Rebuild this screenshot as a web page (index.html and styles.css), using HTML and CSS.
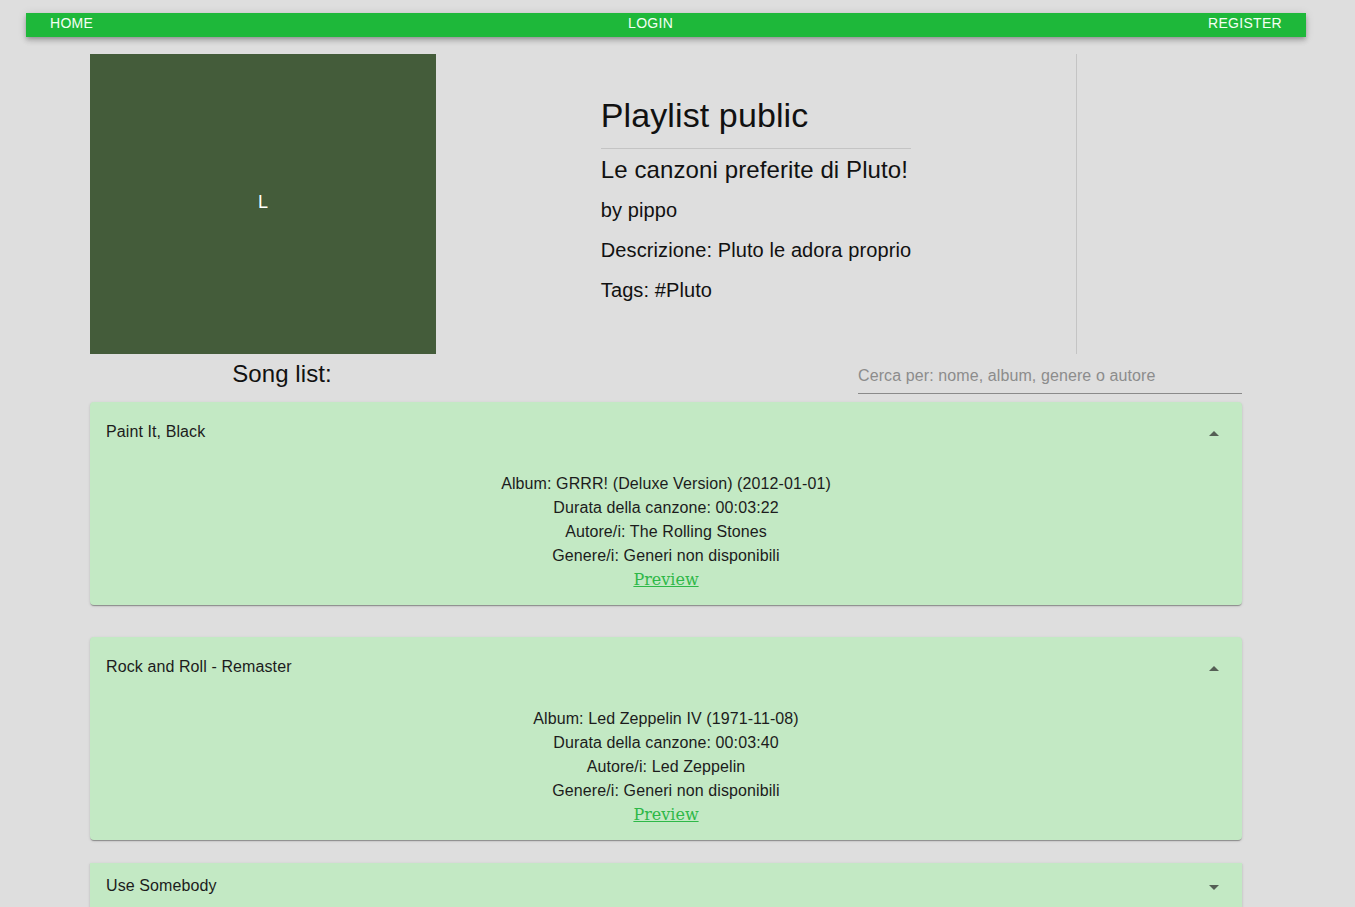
FILE: index.html
```html
<!DOCTYPE html>
<html>
<head>
<meta charset="utf-8">
<link rel="stylesheet" href="styles.css">
</head>
<body>
<div class="page">
  <nav class="navbar">
    <a class="nav-btn">HOME</a>
    <a class="nav-btn">LOGIN</a>
    <a class="nav-btn">REGISTER</a>
  </nav>
  <main class="container">
    <section class="top">
      <div class="cover"><span class="cover-letter">L</span></div>
      <div class="info-area">
        <div class="info">
          <h1 class="title">Playlist public</h1>
          <hr class="divider">
          <h2 class="name">Le canzoni preferite di Pluto!</h2>
          <p class="meta">by pippo</p>
          <p class="meta">Descrizione: Pluto le adora proprio</p>
          <p class="meta">Tags: #Pluto</p>
        </div>
      </div>
      <div class="side"></div>
    </section>
    <section class="list-head">
      <div class="list-title">Song list:</div>
      <div class="spacer"></div>
      <div class="search"><span class="placeholder">Cerca per: nome, album, genere o autore</span></div>
    </section>
    <section class="songs">
      <div class="song expanded">
        <div class="summary"><span>Paint It, Black</span><span class="arrow up"></span></div>
        <div class="details">
          <div>Album: GRRR! (Deluxe Version) (2012-01-01)</div>
          <div>Durata della canzone: 00:03:22</div>
          <div>Autore/i: The Rolling Stones</div>
          <div>Genere/i: Generi non disponibili</div>
          <a class="preview" href="#">Preview</a>
        </div>
      </div>
      <div class="song expanded second">
        <div class="summary"><span>Rock and Roll - Remaster</span><span class="arrow up"></span></div>
        <div class="details">
          <div>Album: Led Zeppelin IV (1971-11-08)</div>
          <div>Durata della canzone: 00:03:40</div>
          <div>Autore/i: Led Zeppelin</div>
          <div>Genere/i: Generi non disponibili</div>
          <a class="preview" href="#">Preview</a>
        </div>
      </div>
      <div class="song collapsed">
        <div class="summary"><span>Use Somebody</span><span class="arrow down"></span></div>
      </div>
    </section>
  </main>
</div>
</body>
</html>
```

FILE: styles.css
```css
html, body {
  margin: 0;
  padding: 0;
  background: #dedede;
  overflow: hidden;
}
body {
  font-family: "Liberation Sans", Arial, sans-serif;
  color: #111;
  letter-spacing: 0.1px;
}
.page {
  width: 1332px;
  padding-top: 13px;
}
.navbar {
  margin-left: 26px;
  width: 1280px;
  height: 24px;
  background: #1eb83a;
  box-shadow: 0 2px 4px -1px rgba(0,0,0,0.2), 0 4px 5px 0 rgba(0,0,0,0.14), 0 1px 10px 0 rgba(0,0,0,0.12);
  display: flex;
  justify-content: space-between;
  align-items: flex-start;
  padding: 0 24px;
  box-sizing: border-box;
}
.nav-btn {
  color: #f4fff4;
  font-size: 14px;
  line-height: 20px;
  letter-spacing: 0.3px;
}
.container {
  margin-left: 90px;
  width: 1152px;
}
.top {
  display: flex;
  margin-top: 17px;
  height: 300px;
}
.cover {
  width: 346px;
  height: 300px;
  background: #445c3a;
  color: #fff;
  font-size: 18px;
  display: flex;
  align-items: center;
  justify-content: center;
  flex: none;
}
.cover-letter {
  margin-bottom: 4px;
}
.info-area {
  width: 640px;
  border-right: 1px solid #c4c4c4;
  display: flex;
  justify-content: center;
  align-items: center;
  flex: none;
}
.info {
  padding-bottom: 8px;
}
.title {
  margin: 0;
  font-size: 34px;
  font-weight: 400;
  line-height: 42px;
}
.divider {
  border: none;
  border-top: 1px solid #c4c4c4;
  margin: 12px 0 5px;
}
.name {
  margin: 0;
  font-size: 24px;
  font-weight: 400;
  line-height: 32px;
}
.meta {
  margin: 8px 0 0;
  font-size: 20px;
  line-height: 32px;
}
.list-head {
  display: flex;
  align-items: flex-end;
  height: 40px;
}
.list-title {
  width: 384px;
  text-align: center;
  font-size: 24px;
  line-height: 32px;
  align-self: flex-start;
  margin-top: 4px;
}
.spacer {
  width: 384px;
}
.search {
  width: 384px;
  border-bottom: 1px solid #8a8a8a;
  height: 30px;
  box-sizing: border-box;
}
.placeholder {
  color: #8c8c8c;
  font-size: 16px;
  line-height: 24px;
  display: block;
}
.songs {
  margin-top: 8px;
}
.song {
  background: #c3e9c4;
  border-radius: 4px;
  box-shadow: 0 2px 1px -1px rgba(0,0,0,0.2), 0 1px 1px 0 rgba(0,0,0,0.14), 0 1px 3px 0 rgba(0,0,0,0.12);
  color: #1c1c1c;
  font-size: 16px;
}
.song.second {
  margin-top: 32px;
}
.song.collapsed {
  margin-top: 23px;
  border-radius: 0;
}
.summary {
  display: flex;
  justify-content: space-between;
  align-items: center;
  height: 56px;
  padding: 2px 23px 0 16px;
}
.collapsed .summary {
  height: 46px;
  padding-top: 0;
}
.arrow {
  width: 0;
  height: 0;
  border-left: 5px solid transparent;
  border-right: 5px solid transparent;
}
.arrow.up {
  border-bottom: 5px solid #555f55;
  margin-top: 2px;
}
.arrow.down {
  border-top: 5px solid #555f55;
  margin-top: 2px;
}
.details {
  padding: 12px 16px 13px;
  text-align: center;
  line-height: 24px;
}
.preview {
  display: block;
  width: max-content;
  margin: 0 auto;
  font-family: "DejaVu Serif", serif;
  color: #2eb848;
  font-size: 16px;
  letter-spacing: 0;
}
```
